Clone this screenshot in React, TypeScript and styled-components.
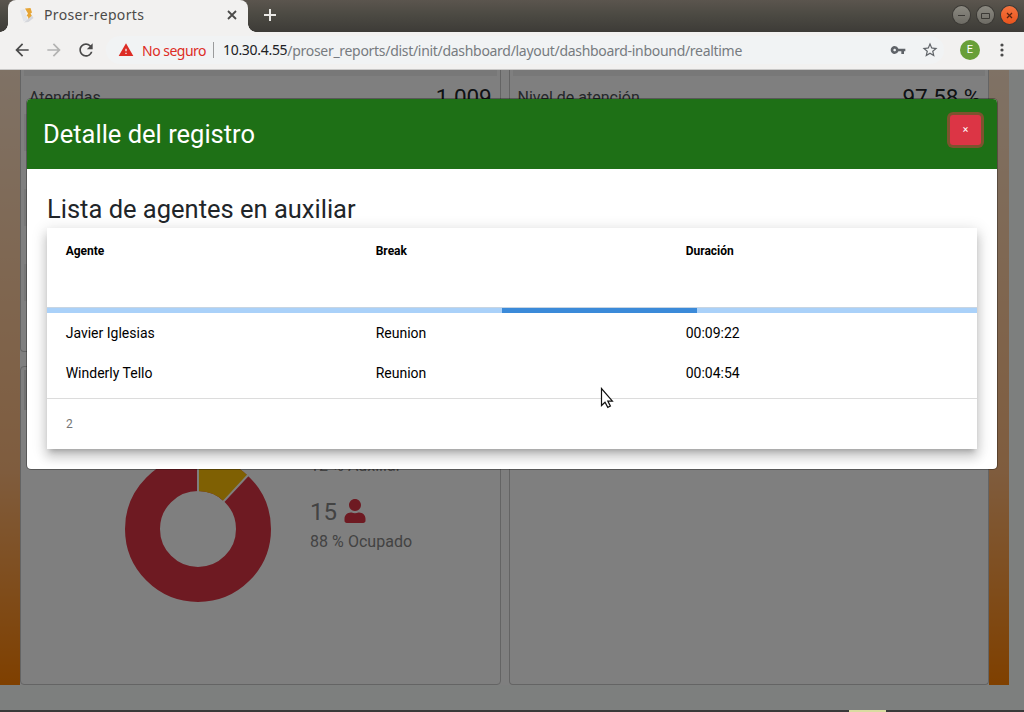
import React from 'react';
import styled, { createGlobalStyle } from 'styled-components';
import { MdArrowBack, MdArrowForward, MdRefresh, MdWarning, MdVpnKey, MdStarBorder } from 'react-icons/md';
import { FaUser } from 'react-icons/fa';

const Global = createGlobalStyle`
  * { box-sizing: border-box; }
  body { margin: 0; font-family: Roboto, sans-serif; color: #212529; overflow: hidden; }
`;
const Window = styled.div`
  width: 1024px; height: 712px; display: flex; flex-direction: column; overflow: hidden; position: relative;
`;
const TabStrip = styled.div`
  height: 32px; flex: none; display: flex; align-items: center; padding: 0 6px 0 8px;
  background: linear-gradient(#5b554e, #4c4a43 45%, #3d3b37);
  font-family: 'Noto Sans', sans-serif;
`;
const Tab = styled.div`
  height: 32px; width: 240px; display: flex; align-items: center; padding: 0 11px 2px 12px;
  background: #f2f1f0; border-radius: 8px 8px 0 0; color: #4b4a48; font-size: 14px; position: relative;
  &::before, &::after {
    content: ''; position: absolute; bottom: 0; width: 8px; height: 8px;
  }
  &::before { left: -8px; background: radial-gradient(circle at 0 0, transparent 7.5px, #f2f1f0 8px); }
  &::after { right: -8px; background: radial-gradient(circle at 100% 0, transparent 7.5px, #f2f1f0 8px); }
`;
const TabTitle = styled.span`flex: 1; padding-left: 8px; letter-spacing: 0.35px; line-height: 20px;`;
const NewTab = styled.div`flex: 1; display: flex; padding-left: 16px; padding-bottom: 2px;`;
const Controls = styled.div`display: flex; gap: 7px; padding-bottom: 2px;`;
const Control = styled.span<{ $close?: boolean }>`
  width: 17px; height: 18px; border-radius: 50%; display: grid; place-items: center;
  background: ${p => (p.$close ? 'linear-gradient(#f5743f, #e9541d)' : 'linear-gradient(#8b8981, #6d6b64)')};
  box-shadow: 0 0 0 1px #3b3935;
`;
const Toolbar = styled.div`
  height: 38px; flex: none; display: flex; align-items: center; background: #f2f1f0;
  border-bottom: 1px solid #c9c8c7; padding: 0 12px 1px 12px; color: #4a4a4a;
  font-family: 'Noto Sans', sans-serif;
`;
const Nav = styled.div`display: flex; gap: 12px; width: 94px; svg { flex: none; }`;
const Address = styled.div`
  width: 838px; height: 28px; border-radius: 14px; background: #f1f3f4; display: flex; align-items: center;
  padding: 0 5px 0 12px; font-size: 14px; white-space: nowrap;
`;
const Unsafe = styled.span`color: #dd2c25; margin-left: 8px; letter-spacing: -0.5px; width: 71px;`;
const Host = styled.span`color: #202124; letter-spacing: -0.3px; border-left: 1px solid #9a9b9c; line-height: 16px; padding-left: 9px;`;
const Path = styled.span`color: #777b80; flex: 1; letter-spacing: -0.3px;`;
const AddressIcons = styled.span`display: flex; align-items: center; gap: 15px; color: #5f6368;`;
const Avatar = styled.span`
  width: 20px; height: 20px; margin-left: 16px; border-radius: 50%; background: #689f38; color: #fff;
  font: 11px/20px Roboto, sans-serif; text-align: center; margin-right: 20px;
`;
const Page = styled.main`flex: 1; position: relative; background: #fbfffd; overflow: hidden;`;
const Board = styled.div`
  width: 1009px; height: 615px; padding: 0 20px; display: flex;
  background: linear-gradient(#ffe4cb, #ffb97c 65%, #ff8000);
`;
const BoardInner = styled.div`flex: 1; display: flex; gap: 8px; background: #fff;`;
const Column = styled.section<{ $split?: boolean }>`
  flex: 1; display: flex; flex-direction: column; gap: ${p => (p.$split ? '14px' : '0')};
`;
const Card = styled.div<{ $height?: number; $top?: boolean }>`
  ${p => (p.$height ? `height: ${p.$height}px;` : 'flex: 1;')}
  border: 1px solid #c8c8c8; ${p => (p.$top ? 'border-top: 0;' : '')}
  border-radius: ${p => (p.$top ? '0 0 4px 4px' : '4px')}; background: #fff;
`;
const Metrics = styled.div`
  margin: 0 3px; height: 233px;
  background: repeating-linear-gradient(#fff 0 38px, #f0f0f0 38px 75px);
`;
const CardBand = styled.div`height: 6px; margin: 0 3px; background: #f0f0f0;`;
const Metric = styled.div`
  display: flex; justify-content: space-between; align-items: center; padding: 0 5px; height: 42px;
  font-size: 16px; color: #4c5054;
`;
const MetricValue = styled.span`font-size: 22.5px; color: #212529; letter-spacing: -0.15px;`;
const CardTitle = styled.div`height: 40px; margin: 3px; background: #e5e5e5;`;
const Status = styled.div`display: flex; padding: 41px 0 0 102px;`;
const Legend = styled.div`margin-left: 37px; color: #868686; font-size: 16px; letter-spacing: 0.05px;`;
const LegendLabel = styled.div`line-height: 24px; color: #868686;`;
const LegendCount = styled.div`
  font-size: 24px; line-height: 36px; margin-top: 16px; display: flex; align-items: center; gap: 6px; color: #868686;
  svg { margin-bottom: 2px; }
`;
const Backdrop = styled.div`position: absolute; inset: 0; background: rgba(0, 0, 0, 0.5); padding: 28px 26px;`;
const Modal = styled.div`
  width: 972px; height: 372px; border-radius: 5px; background: #fff; overflow: hidden;
  border: 1px solid rgba(0, 0, 0, 0.3); background-clip: padding-box;
`;
const ModalHeader = styled.header`
  height: 70px; background: #1e7016; display: flex; align-items: flex-start; justify-content: space-between;
  padding: 15px 16px 0 16px; color: #fff;
`;
const ModalTitle = styled.h4`margin: 0; font-weight: 400; font-size: 25.5px; line-height: 40px;`;
const CloseButton = styled.button`
  width: 31px; height: 30px; border: 0; border-radius: 3px; background: #dc3545; color: #fff;
  font: 10.5px/30px Roboto, sans-serif; padding: 0; margin-top: 0.5px; box-shadow: 0 0 0 3px rgba(220, 53, 69, 0.5);
`;
const ModalBody = styled.div`padding: 25px 20px 20px;`;
const Heading = styled.h4`margin: 0; font-weight: 400; font-size: 25.5px; line-height: 31px; padding-bottom: 3px;`;
const Table = styled.div`
  height: 221px; background: #fff; font-size: 14px; color: #000;
  box-shadow: 0 5px 5px -3px rgba(0,0,0,.2), 0 8px 10px 1px rgba(0,0,0,.14), 0 3px 14px 2px rgba(0,0,0,.12);
`;
const Row = styled.div<{ $head?: boolean }>`
  display: grid; grid-template-columns: 310px 310px 1fr; padding-left: 18.7px;
  height: ${p => (p.$head ? '79px' : '40px')}; line-height: ${p => (p.$head ? '46px' : '40px')};
  ${p => (p.$head ? 'font-size: 12px; font-weight: 700;' : '')}
`;
const Progress = styled.div`
  height: 6px; background: #aad1f9; border-top: 1px solid #c8d5e2; display: flex; padding-left: 454.5px;
`;
const ProgressBar = styled.div`width: 195px; background: #3b8ad9;`;
const Footer = styled.div`
  margin-top: 5px; border-top: 1px solid #dcdcdc; height: 51px; line-height: 50px; padding-left: 19px;
  font-size: 12px; color: #757575;
`;
const Pointer = styled.svg`position: absolute; left: 600px; top: 387px;`;
const Dock = styled.div`height: 2px; flex: none; background: #393939; display: flex; padding-left: 849px;`;
const DockItem = styled.span`width: 37px; background: #d9dba0;`;

const agents = [
  { name: 'Javier Iglesias', reason: 'Reunion', time: '00:09:22' },
  { name: 'Winderly Tello', reason: 'Reunion', time: '00:04:54' },
];

const Donut = () => (
  <svg width="150" height="150" viewBox="-75 -75 150 150">
    <circle r="55.5" fill="none" stroke="#dc3545" strokeWidth="35" />
    <path d="M0-73A73 73 0 0 1 49.7-53.5L25.9-27.8A38 38 0 0 0 0-38Z" fill="#ffc107" />
    <path d="M0-74V-37M50.4-54.2L25.2-27.1" stroke="#fff" strokeWidth="2" />
  </svg>
);

export default function App() {
  return (
    <Window>
      <Global />
      <TabStrip>
        <Tab>
          <svg width="16" height="16" viewBox="0 0 16 16">
            <path d="M0 3.5L4.5 2l3 11-4 1.5z" fill="#e3e5ea" />
            <path d="M5 1.5L10.500 1l1.500 4.500-1.500 1L12 9l-3.500 3.500L8 9.500 6.500 9 8 6.500z" fill="#e6a536" />
            <path d="M12 8.500l1.500 2.500-5 4-4.500.5z" fill="#d5d7dc" />
          </svg>
          <TabTitle>Proser-reports</TabTitle>
          <svg width="10" height="10"><path d="M1 1l8 8M9 1l-8 8" stroke="#4b4a48" strokeWidth="1.8" /></svg>
        </Tab>
        <NewTab><svg width="12" height="12"><path d="M6 0v12M0 6h12" stroke="#eae9e6" strokeWidth="2" /></svg></NewTab>
        <Controls>
          <Control><svg width="9" height="9"><path d="M1 4.5h7" stroke="#3b3935" /></svg></Control>
          <Control><svg width="9" height="9"><path d="M.5 2.5h8v5h-8z" fill="none" stroke="#3b3935" /></svg></Control>
          <Control $close><svg width="9" height="9"><path d="M2 2l5 5M7 2l-5 5" stroke="#5a2410" strokeWidth="1.3" /></svg></Control>
        </Controls>
      </TabStrip>
      <Toolbar>
        <Nav>
          <MdArrowBack size={20} />
          <MdArrowForward size={20} color="#b3b3b2" />
          <MdRefresh size={20} />
        </Nav>
        <Address>
          <MdWarning size={16} color="#dd2c25" />
          <Unsafe>No seguro</Unsafe>
          <Host>10.30.4.55</Host>
          <Path>/proser_reports/dist/init/dashboard/layout/dashboard-inbound/realtime</Path>
          <AddressIcons><MdVpnKey size={16} /><MdStarBorder size={18} /></AddressIcons>
        </Address>
        <Avatar>E</Avatar>
        <svg width="4" height="14" fill="#4a4a4a"><circle cx="2" cy="2" r="1.6" /><circle cx="2" cy="7" r="1.600" /><circle cx="2" cy="12" r="1.600" /></svg>
      </Toolbar>
      <Page>
        <Board>
          <BoardInner>
            <Column $split>
              <Card $top $height={282}>
                <CardBand />
                <Metrics>
                  <Metric>Atendidas<MetricValue>1.009</MetricValue></Metric>
                </Metrics>
              </Card>
              <Card>
                <CardTitle />
                <Status>
                  <Donut />
                  <Legend>
                    <LegendLabel>12 % Auxiliar</LegendLabel>
                    <LegendCount>15 <FaUser size={24} color="#dc3545" /></LegendCount>
                    <LegendLabel>88 % Ocupado</LegendLabel>
                  </Legend>
                </Status>
              </Card>
            </Column>
            <Column>
              <Card $top>
                <CardBand />
                <Metrics>
                  <Metric>Nivel de atención<MetricValue>97.58 %</MetricValue></Metric>
                </Metrics>
              </Card>
            </Column>
          </BoardInner>
        </Board>
        <Backdrop>
          <Modal>
            <ModalHeader>
              <ModalTitle>Detalle del registro</ModalTitle>
              <CloseButton>×</CloseButton>
            </ModalHeader>
            <ModalBody>
              <Heading>Lista de agentes en auxiliar</Heading>
              <Table>
                <Row $head><span>Agente</span><span>Break</span><span>Duración</span></Row>
                <Progress><ProgressBar /></Progress>
                {agents.map(a => (
                  <Row key={a.name}><span>{a.name}</span><span>{a.reason}</span><span>{a.time}</span></Row>
                ))}
                <Footer>2</Footer>
              </Table>
            </ModalBody>
          </Modal>
        </Backdrop>
      </Page>
      <Dock><DockItem /></Dock>
      <Pointer width="14" height="22" viewBox="0 0 14 22">
        <path d="M1.5 1.5v17l3.5-3.3 2.8 5.2 2.6-1.3-2.6-5H12.4z" fill="#fff" stroke="#111" strokeWidth="1.2" />
      </Pointer>
    </Window>
  );
}
